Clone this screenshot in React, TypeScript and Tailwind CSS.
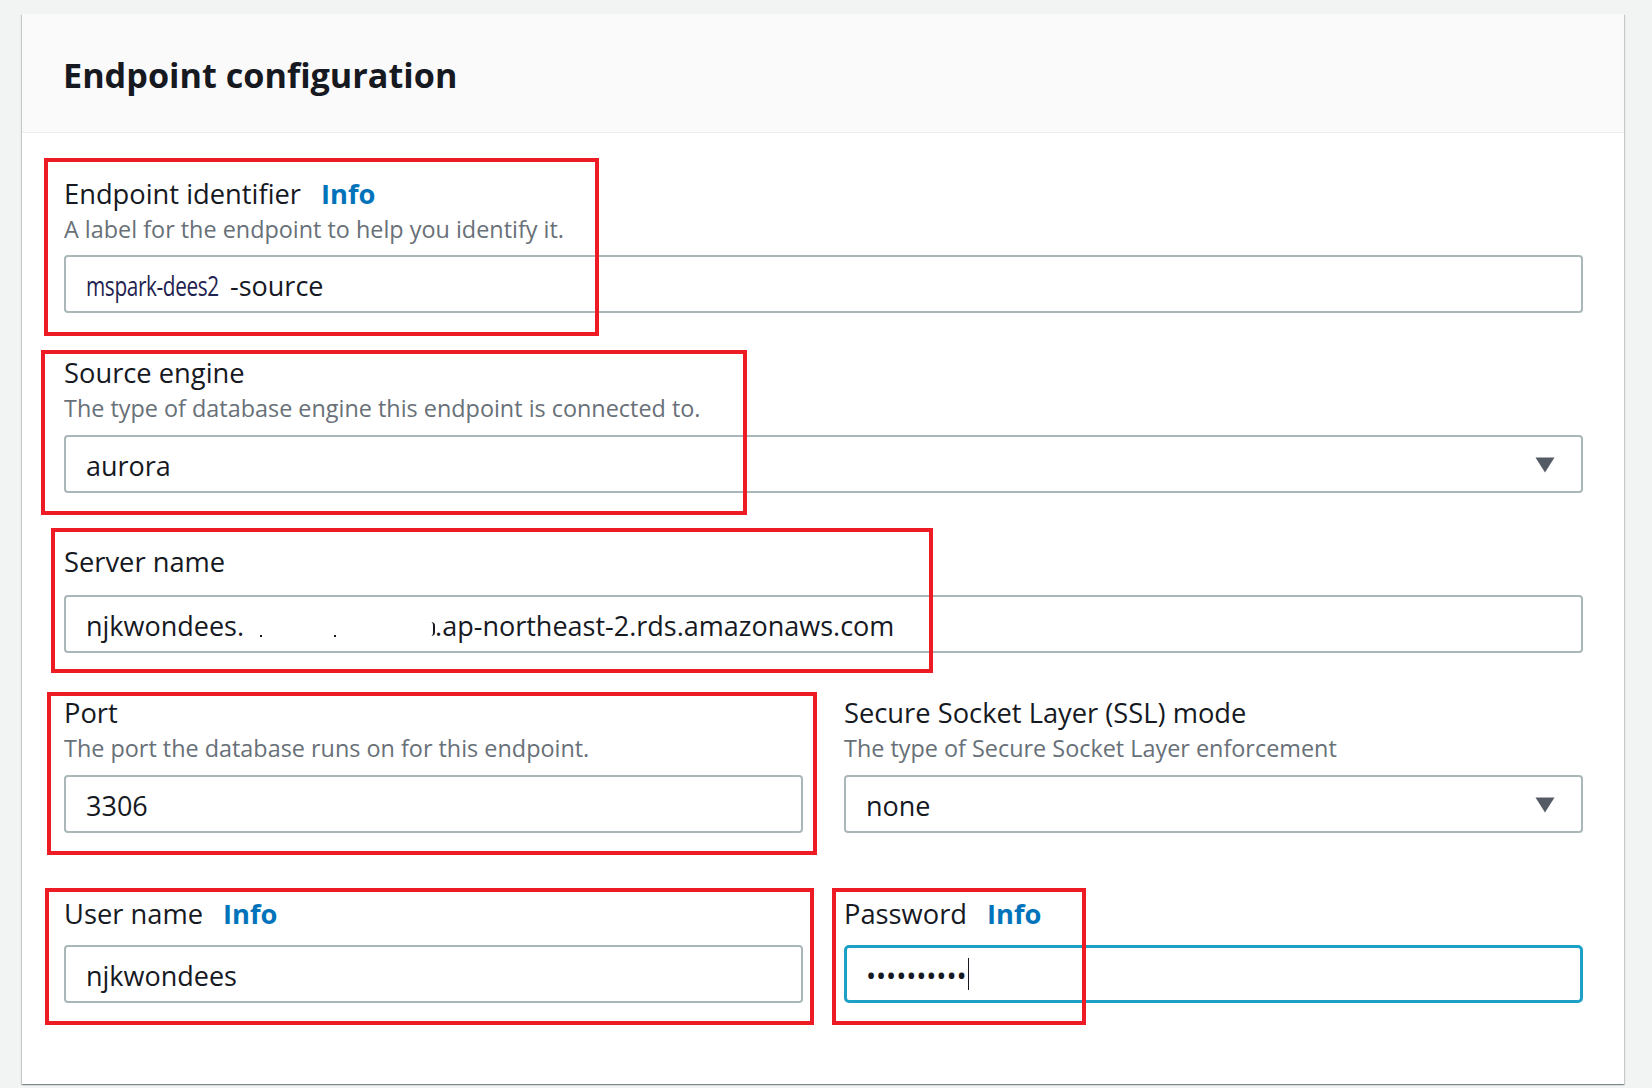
import type { ReactNode } from "react";

function Label({ children, info }: { children: ReactNode; info?: boolean }) {
  return (
    <div className="flex h-[34px] items-center text-[27.3px] leading-[34px] text-[#16191f]">
      <span>{children}</span>
      {info && <span className="ml-[20px] font-bold text-[#0073bb]">Info</span>}
    </div>
  );
}

function Desc({ children }: { children: ReactNode }) {
  return <div className="mt-[3px] h-[30px] text-[23.4px] leading-[30px] text-[#687078]">{children}</div>;
}

function Box({ children, className = "" }: { children: ReactNode; className?: string }) {
  return (
    <div
      className={`flex h-[58px] items-center rounded-[4px] border-2 border-[#aab7b8] bg-white pl-[20px] pr-[26px] pt-[4px] text-[27px] text-[#16191f] ${className}`}
    >
      {children}
    </div>
  );
}

function Caret() {
  return (
    <svg width="20" height="17" viewBox="0 0 20 17" className="-mt-[4px] ml-auto shrink-0">
      <path d="M0.5 1.5h19l-9.5 15z" fill="#545b64" />
    </svg>
  );
}

const marks = [
  "left-[44px] top-[158px] w-[555px] h-[178px]",
  "left-[41px] top-[350px] w-[706px] h-[165px]",
  "left-[51px] top-[528px] w-[882px] h-[145px]",
  "left-[47px] top-[692px] w-[770px] h-[163px]",
  "left-[45px] top-[888px] w-[769px] h-[137px]",
  "left-[832px] top-[888px] w-[254px] h-[137px]",
];

export default function App() {
  return (
    <div className="relative h-[1088px] overflow-hidden bg-[#f2f3f3] pl-[22px] pt-[14px] font-['Open_Sans',sans-serif]">
      <div className="w-[1602px] bg-white shadow-[0_1px_1px_0_rgba(0,28,36,0.3),1px_1px_1px_0_rgba(0,28,36,0.15),-1px_1px_1px_0_rgba(0,28,36,0.15)]">
        <div className="h-[119px] border-b border-[#eaeded] bg-[#fafafa] pl-[41px] pt-[39px]">
          <h2 className="text-[34.2px] font-bold leading-[44px] text-[#16191f]">Endpoint configuration</h2>
        </div>

        <div className="pb-[81px] pl-[42px] pr-[41px] pt-[44px]">
          <Label info>Endpoint identifier</Label>
          <Desc>A label for the endpoint to help you identify it.</Desc>
          <Box className="mt-[11px] pl-[17px]">
            <span className="inline-block w-[137px] whitespace-nowrap">
              <span className="inline-block origin-left scale-x-[0.77] tracking-[-0.5px] text-[#1f2350]">mspark-dees2</span>
            </span>
            <span className="ml-[7px]">-source</span>
          </Box>

          <div className="mt-[43px]">
            <Label>Source engine</Label>
            <Desc>The type of database engine this endpoint is connected to.</Desc>
            <Box className="mt-[12px]">
              <span>aurora</span>
              <Caret />
            </Box>
          </div>

          <div className="mt-[52px]">
            <Label>Server name</Label>
            <Box className="mt-[16px]">
              <span>njkwondees.</span>
              <span className="relative inline-block h-[30px] w-[191px]">
                <span className="absolute left-[16px] top-[24px] h-[2px] w-[2px] bg-[#16191f]" />
                <span className="absolute left-[90px] top-[24px] h-[2px] w-[2px] bg-[#16191f]" />
                <span className="absolute right-0 top-[11px] h-[14px] w-[4px] rounded-r-full border-r-2 border-[#16191f]" />
              </span>
              <span>.ap-northeast-2.rds.amazonaws.com</span>
            </Box>
          </div>

          <div className="mt-[43px] grid grid-cols-2 gap-x-[41px]">
            <div>
              <Label>Port</Label>
              <Desc>The port the database runs on for this endpoint.</Desc>
              <Box className="mt-[12px]">3306</Box>
            </div>
            <div>
              <Label>Secure Socket Layer (SSL) mode</Label>
              <Desc>The type of Secure Socket Layer enforcement</Desc>
              <Box className="mt-[12px]">
                <span>none</span>
                <Caret />
              </Box>
            </div>
          </div>

          <div className="mt-[64px] grid grid-cols-2 gap-x-[41px]">
            <div>
              <Label info>User name</Label>
              <Box className="mt-[14px]">njkwondees</Box>
            </div>
            <div>
              <Label info>Password</Label>
              <div className="mt-[14px] flex h-[58px] items-center rounded-[5px] border-[3px] border-[#1ca0c6] bg-white pl-[19px] pt-[4px] text-[27px] text-[#16191f]">
                <span className="tracking-[-0.1px]">••••••••••</span>
                <span className="-mt-[4px] ml-[1px] h-[32px] w-[1.5px] bg-[#16191f]" />
              </div>
            </div>
          </div>
        </div>
      </div>

      {marks.map((m) => (
        <div key={m} className={`pointer-events-none absolute border-[4px] border-[#ed1c24] ${m}`} />
      ))}
    </div>
  );
}
